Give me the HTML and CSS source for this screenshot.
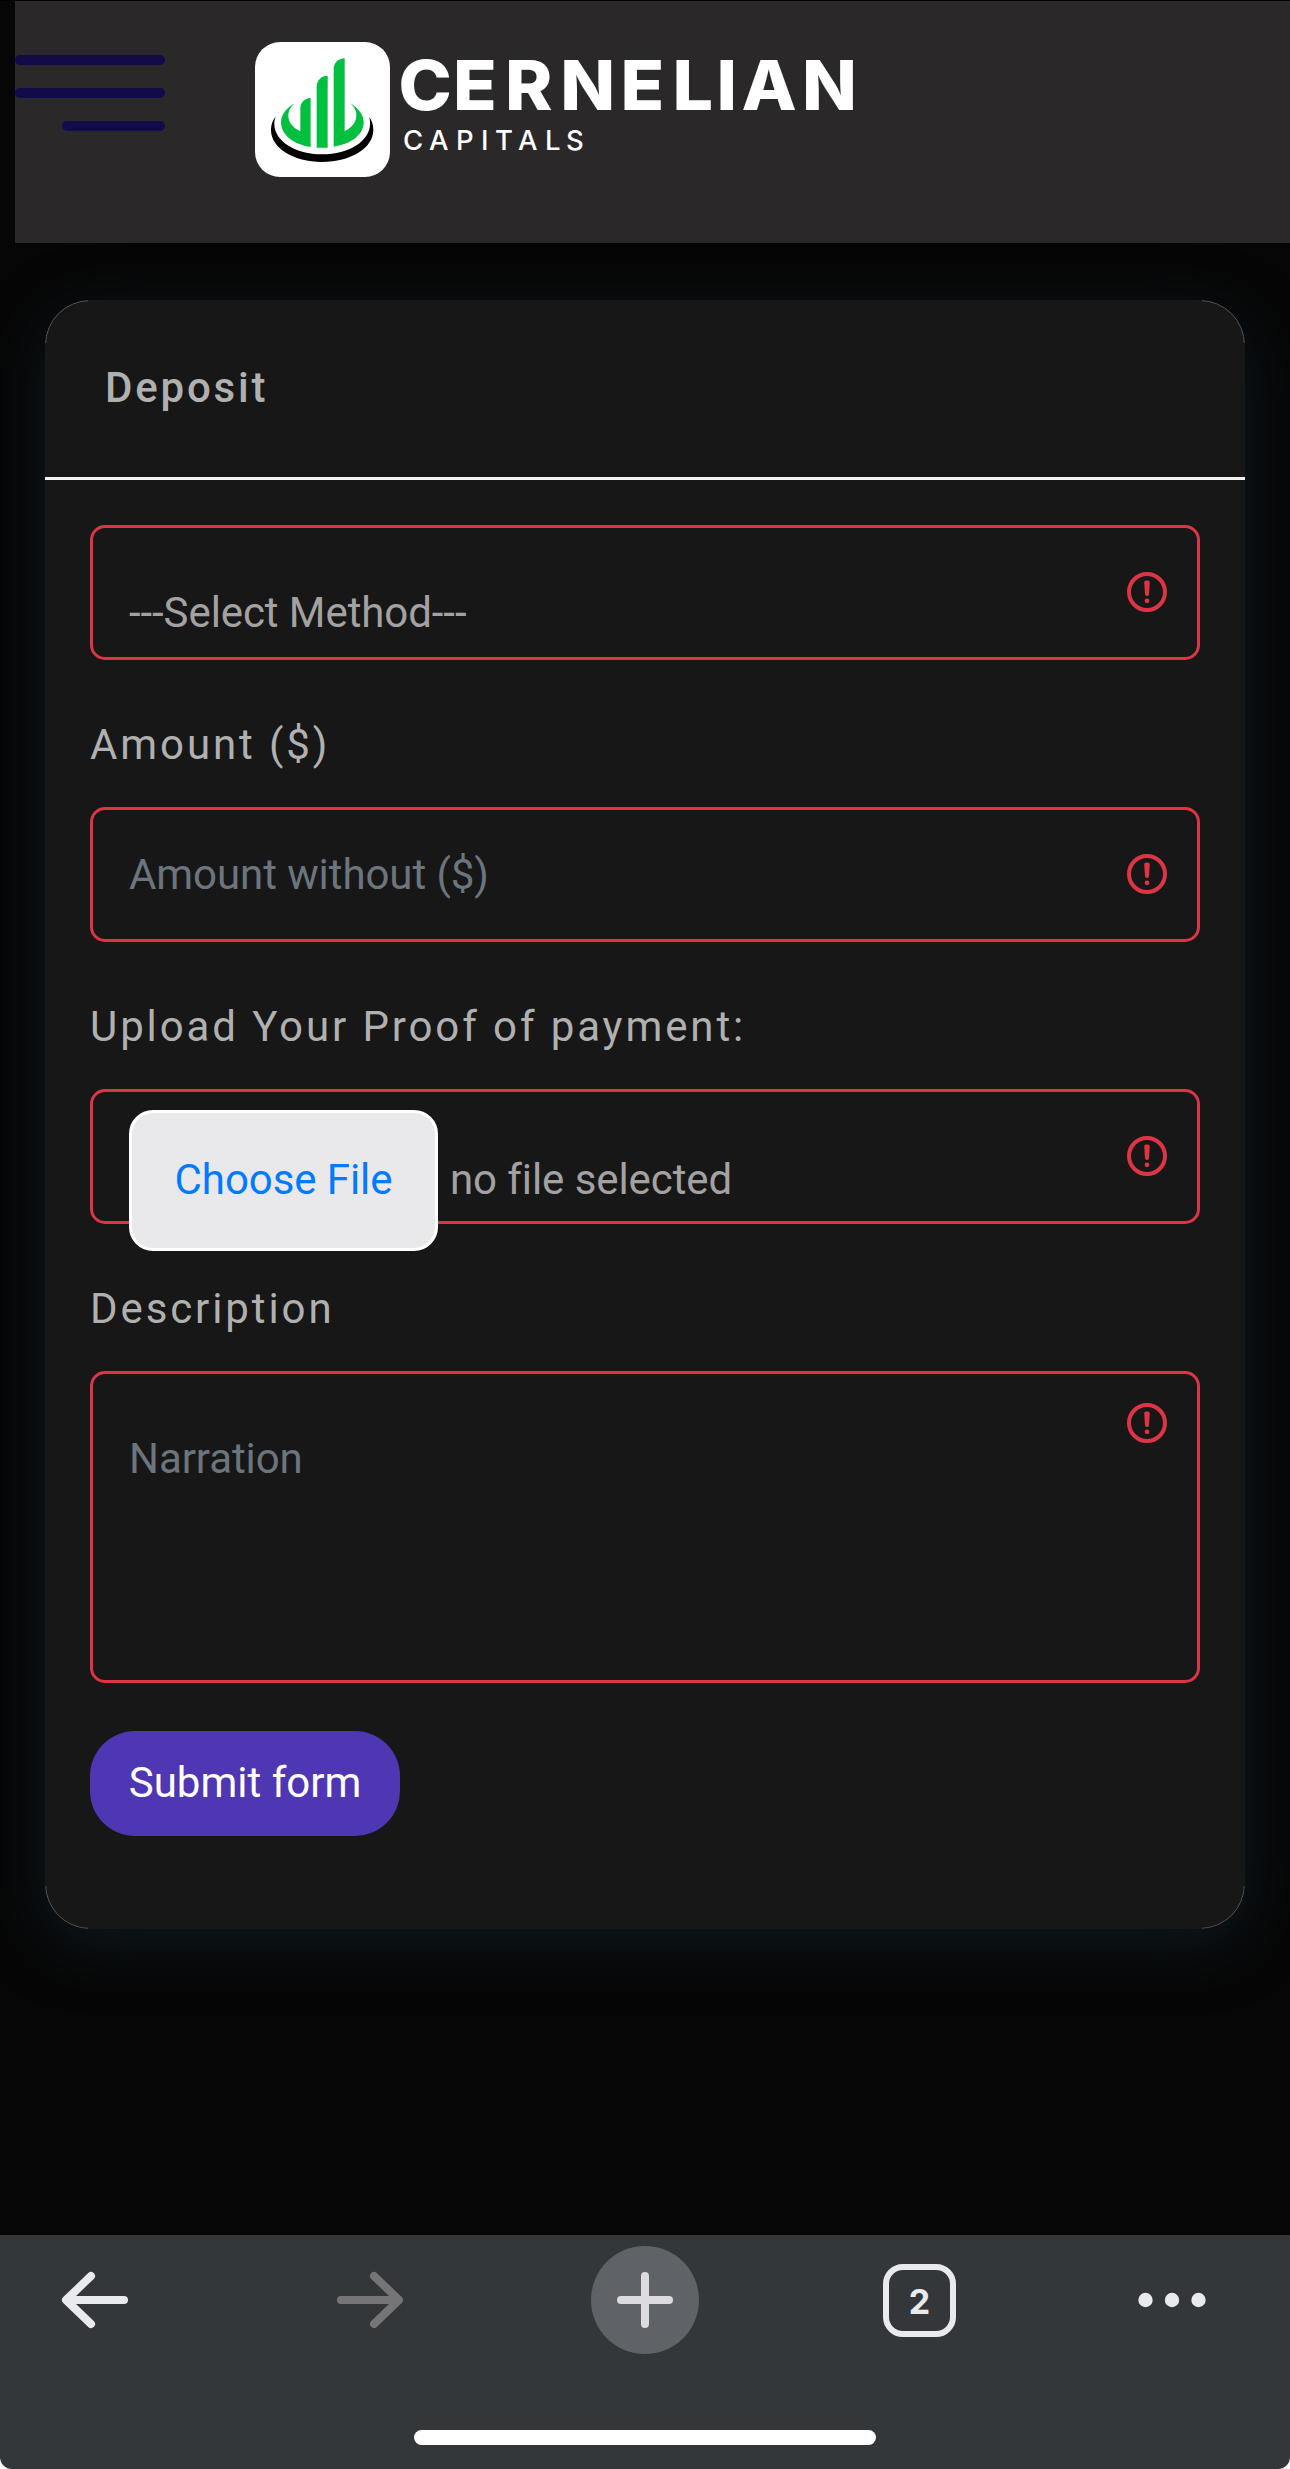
FILE: index.html
```html
<!DOCTYPE html>
<html lang="en">
<head>
    <meta charset="UTF-8">
    <meta name="viewport" content="width=device-width, initial-scale=1.0">
    <title>Cernelian Capitals - Deposit</title>
    <link rel="stylesheet" href="styles.css">
</head>
<body>

    <header class="header">
        <div class="hamburger">
            <span class="line"></span>
            <span class="line"></span>
            <span class="line short"></span>
        </div>
        <svg class="logo" width="620" height="135" viewBox="0 0 620 135">
            <rect width="135" height="135" rx="25" fill="#fff"/>
            <g transform="scale(0.33333)">
                <path fill="#02c03f" d="M119 184C92 200 78 220 78 241C78 278 115 308 167 315V168C148 169 136 182 136 200V268C112 256 100 240 100 221C100 206 108 194 119 184Z"/>
                <path fill="#02c03f" d="M185 317V135C185 115 199 101 218 101V317Z"/>
                <path fill="#02c03f" d="M236 314V82C236 62 250 50 269 49V268C292 256 304 240 304 219C304 205 297 194 286 184C312 200 326 220 326 241C326 278 288 307 236 314Z"/>
                <path fill="#000" d="M62 224C52 236 48 248 48 264C48 318 116 360 201 360C287 360 355 318 355 264C355 248 351 236 342 224C345 232 345 238 345 246C345 297 282 337 201 337C121 337 58 297 58 246C58 238 59 232 62 224Z"/>
            </g>
            <text class="logo-name" transform="scale(1.04 1)" x="138 190.4 240.4 293.5 351.5 401.5 443.8 467.8 526" y="68">CERNELIAN</text>
            <text class="logo-sub" x="148 174 201 226 240 263 290 311" y="108">CAPITALS</text>
        </svg>
    </header>

    <div class="card">
        <h4 class="card-header">Deposit</h4>
        <form class="card-body">
            <div class="field">
                <select class="form-control select">
                    <option>---Select Method---</option>
                </select>
                <svg class="error-icon" viewBox="0 0 12 12"><circle cx="6" cy="6" r="4.5"/><path d="M5.8 3.6h.4L6 6.5z"/><circle class="dot" cx="6" cy="8.2" r=".6"/></svg>
            </div>

            <label for="amount">Amount ($)</label>
            <div class="field">
                <input type="text" class="form-control" id="amount" placeholder="Amount without ($)">
                <svg class="error-icon" viewBox="0 0 12 12"><circle cx="6" cy="6" r="4.5"/><path d="M5.8 3.6h.4L6 6.5z"/><circle class="dot" cx="6" cy="8.2" r=".6"/></svg>
            </div>

            <label>Upload Your Proof of payment:</label>
            <div class="field">
                <div class="form-control file">
                    <button type="button" class="file-btn">Choose File</button>
                    <span class="file-name">no file selected</span>
                </div>
                <svg class="error-icon" viewBox="0 0 12 12"><circle cx="6" cy="6" r="4.5"/><path d="M5.8 3.6h.4L6 6.5z"/><circle class="dot" cx="6" cy="8.2" r=".6"/></svg>
            </div>

            <label for="description">Description</label>
            <div class="field">
                <textarea class="form-control textarea" id="description" placeholder="Narration"></textarea>
                <svg class="error-icon top" viewBox="0 0 12 12"><circle cx="6" cy="6" r="4.5"/><path d="M5.8 3.6h.4L6 6.5z"/><circle class="dot" cx="6" cy="8.2" r=".6"/></svg>
            </div>

            <button type="button" class="submit">Submit form</button>
        </form>
    </div>

    <div class="toolbar-wrap">
        <nav class="toolbar">
            <div class="tools">
                <svg width="68" height="58" viewBox="0 0 68 58" class="tool back"><path d="M63 29H6M30 5L5 29L30 53"/></svg>
                <svg width="68" height="58" viewBox="0 0 68 58" class="tool forward"><path d="M5 29H62M38 5L63 29L38 53"/></svg>
                <svg width="108" height="108" viewBox="0 0 108 108" class="tool plus"><circle cx="54" cy="54" r="54"/><path d="M30 54H78M54 30V78"/></svg>
                <div class="tabs">2</div>
                <svg width="68" height="16" viewBox="0 0 68 16" class="tool more"><circle cx="7.5" cy="8" r="7.2"/><circle cx="34" cy="8" r="7.2"/><circle cx="60.5" cy="8" r="7.2"/></svg>
            </div>
            <div class="home-bar"></div>
        </nav>
    </div>

</body>
</html>
```
FILE: styles.css
```css
* {
    box-sizing: border-box;
}
body {
    margin: 0;
    height: 2469px;
    display: flex;
    flex-direction: column;
    overflow: hidden;
    background-color: #060606;
    border-top: 1px solid #000;
    font-family: Roboto, sans-serif;
    font-size: 42px;
    line-height: 63px;
    color: #b0b0b0;
}
button, input, select, textarea {
    font: inherit;
}
.header {
    display: flex;
    align-items: flex-start;
    flex-shrink: 0;
    height: 242px;
    margin-left: 15px;
    background-color: #2b2829;
}
.hamburger {
    display: flex;
    flex-direction: column;
    align-items: flex-end;
    gap: 23px;
    width: 150px;
    padding-top: 54px;
}
.line {
    width: 150px;
    height: 10px;
    border-radius: 5px;
    background-color: #110b49;
}
.line.short {
    width: 103px;
}
.logo {
    margin: 41px 0 0 90px;
    fill: #fff;
}
.logo-name {
    font-family: Inter, sans-serif;
    font-size: 69px;
    font-weight: 800;
}
.logo-sub {
    font-family: Inter, sans-serif;
    font-size: 27.5px;
    font-weight: 500;
}

/* card */
.card {
    position: relative;
    flex-shrink: 0;
    height: 1629px;
    margin: 57px 45px 0;
    border-radius: 45px;
    background-color: #171717;
    box-shadow: 0 15px 60px rgb(14, 25, 32);
}
/* thin highlight on the rounded corners */
.card::after {
    content: "";
    position: absolute;
    inset: 0;
    border: 1px solid #58585a;
    border-radius: 45px;
    pointer-events: none;
    -webkit-mask: linear-gradient(#000, #000) 0 0, linear-gradient(#000, #000) 100% 0, linear-gradient(#000, #000) 0 100%, linear-gradient(#000, #000) 100% 100%;
    -webkit-mask-size: 43px 43px;
    -webkit-mask-repeat: no-repeat;
}
.card-header {
    height: 180px;
    margin: 0;
    padding: 56px 60px 0;
    border-bottom: 3px solid #f4eff2;
    font-size: 42px;
    font-weight: 500;
    letter-spacing: 2.8px;
}
.card-body {
    padding: 45px;
}
label {
    display: block;
    margin: 53px 0 31px;
    letter-spacing: 2.9px;
}
.field {
    position: relative;
}
.form-control {
    display: block;
    width: 100%;
    height: 135px;
    padding: 0 36px;
    border: 3px solid #dc3545;
    border-radius: 15px;
    background: transparent;
    color: #a3a1a2;
    letter-spacing: -0.08px;
    outline: none;
}
.form-control::placeholder {
    color: #6c757d;
    opacity: 1;
}
.select {
    appearance: none;
    padding: 53px 36px 13px;
}
.file {
    display: flex;
    align-items: flex-start;
    gap: 12px;
    padding-top: 18px;
}
.file-btn {
    width: 309px;
    height: 141px;
    flex-shrink: 0;
    padding: 0 0 2px;
    border: 3px solid #fff;
    border-radius: 24px;
    background-color: #e9e9eb;
    color: #007aff;
    letter-spacing: inherit;
}
.file-name {
    line-height: 139px;
}
.textarea {
    height: 312px;
    padding: 53px 36px;
    resize: none;
}
.error-icon {
    position: absolute;
    top: 43px;
    right: 29px;
    width: 48px;
    height: 48px;
    fill: none;
    stroke: #dc3545;
}
.error-icon.top {
    top: 28px;
}
.error-icon path {
    stroke-linejoin: round;
}
.error-icon .dot {
    fill: #dc3545;
    stroke: none;
}
.submit {
    display: block;
    width: 310px;
    height: 105px;
    margin-top: 48px;
    padding: 0 0 2px;
    border: none;
    border-radius: 45px;
    background-color: #4f36b3;
    color: #fff;
}

/* browser toolbar */
.toolbar-wrap {
    margin-top: auto;
    background-color: #fff;
}
.toolbar {
    display: flex;
    flex-direction: column;
    align-items: center;
    height: 234px;
    padding-top: 11px;
    border-radius: 0 0 12px 12px;
    background-color: #34373a;
}
.tools {
    display: grid;
    grid-template-columns: 190px 360px 190px 359px 145px;
    justify-items: center;
    align-items: center;
    align-self: stretch;
    height: 108px;
}
.tool {
    fill: none;
    stroke-width: 8;
    stroke-linecap: round;
    stroke-linejoin: round;
}
.back {
    stroke: #e8eaed;
}
.forward {
    stroke: #757577;
}
.plus {
    stroke: #dcdbe0;
}
.plus circle {
    fill: #5f6367;
    stroke: none;
}
.tabs {
    width: 73px;
    height: 73px;
    border: 6px solid #e8eaed;
    border-radius: 20px;
    font-family: Inter, sans-serif;
    font-size: 34px;
    font-weight: 700;
    line-height: 64px;
    text-align: center;
    color: #e8eaed;
}
.more {
    fill: #e8eaed;
}
.home-bar {
    width: 462px;
    height: 15px;
    margin-top: 76px;
    border-radius: 8px;
    background-color: #fff;
}
```
